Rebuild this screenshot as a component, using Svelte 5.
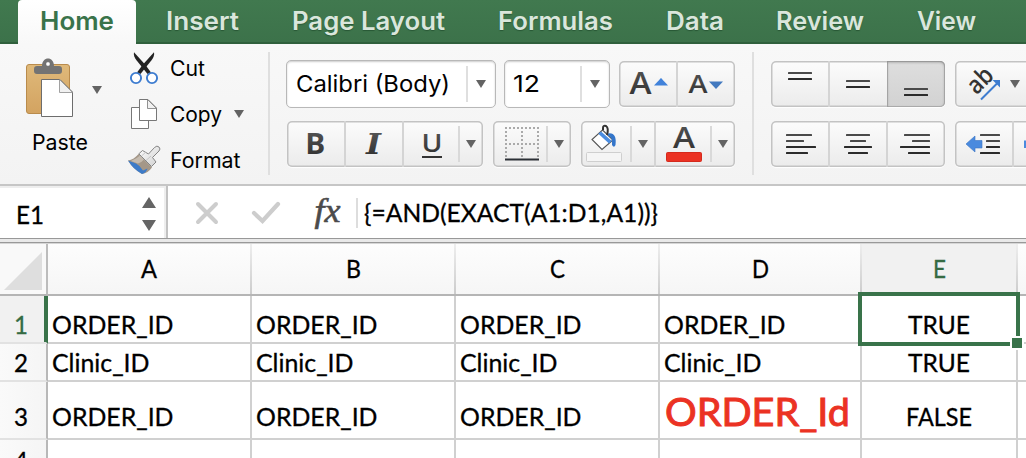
<script>
  const tabs = [
    { name: 'Home', w: 74, cell: 118, active: true },
    { name: 'Insert', w: 73, cell: 133 },
    { name: 'Page Layout', w: 153, cell: 198 },
    { name: 'Formulas', w: 115, cell: 176 },
    { name: 'Data', w: 58, cell: 104 },
    { name: 'Review', w: 88, cell: 146 },
    { name: 'View', w: 59, cell: 106 }
  ];
  const columns = ['A', 'B', 'C', 'D', 'E', ''];
  const letterWidth = { A: 16, B: 15, C: 15, D: 17, E: 13 };
  const order = { text: 'ORDER_ID', w: 121.5 };
  const clinic = { text: 'Clinic_ID', w: 97.5 };
  const rows = [
    { n: 1, cells: [order, order, order, order, { text: 'TRUE', w: 62 }, null] },
    { n: 2, cells: [clinic, clinic, clinic, clinic, { text: 'TRUE', w: 62 }, null] },
    { n: 3, cells: [order, order, order, { text: 'ORDER_Id', w: 185, big: true }, { text: 'FALSE', w: 66 }, null] },
    { n: 4, cells: [null, null, null, null, null, null] }
  ];
  const alignLines = [
    [[786, 812], [786, 804], [786, 816], [786, 808]],
    [[846, 870], [850, 866], [844, 872], [848, 868]],
    [[904, 930], [912, 930], [900, 930], [908, 930]]
  ];
</script>

{#snippet label(text, w, size, cap)}
  <svg class="label" width={w} height={cap}>
    <text x="0" y={cap} font-size={size} textLength={w} lengthAdjust="spacingAndGlyphs">{text}</text>
  </svg>
{/snippet}

{#snippet arrow()}
  <svg class="arrow" width="10" height="8" viewBox="0 0 10 8"><path d="M0 0H10L5 8Z" fill="#636363" /></svg>
{/snippet}

{#snippet bars(list, top)}
  {#each list as [a, b], i}
    <rect x={a} y={top + i * 6} width={b - a} height="2" rx=".5" fill={i < list.length / 2 ? '#4a4a4a' : '#2b2b2b'} />
  {/each}
{/snippet}

<svg width="0" height="0" class="defs">
  <defs>
    <linearGradient id="ink" x1="0" y1="0" x2="0" y2="1"><stop offset="0" stop-color="#5a5a5a" /><stop offset="1" stop-color="#2c2c2c" /></linearGradient>
    <linearGradient id="board" x1="0" y1="0" x2="0" y2="1"><stop offset="0" stop-color="#dfb97a" /><stop offset="1" stop-color="#d3a361" /></linearGradient>
    <linearGradient id="metal" x1="0" y1="0" x2="1" y2="1"><stop offset="0" stop-color="#ffffff" /><stop offset="1" stop-color="#cfcfcf" /></linearGradient>
  </defs>
</svg>

<div class="app">
  <nav class="tabs">
    {#each tabs as tab}
      <div class="tab" class:active={tab.active} style:width="{tab.cell}px">
        {@render label(tab.name, tab.w, 25, 18)}
      </div>
    {/each}
  </nav>

  <section class="ribbon">
    <div class="paste">
      <svg width="115" height="76" viewBox="0 46 115 76">
        <rect x="26.5" y="64.5" width="43" height="49" rx="2.5" fill="url(#board)" stroke="#b98b4c" />
        <path d="M37 66H42C42 61 45 58.5 48 58.5S54 61 54 66H59Q62 66 62 69V71Q62 74 59 74H37Q34 74 34 71V69Q34 66 37 66Z" fill="#737373" />
        <circle cx="48" cy="64" r="2.2" fill="#fff" stroke="#555" stroke-width=".5" />
        <path d="M41.5 79.5H60L72.5 92V116.5H41.5Z" fill="#fff" stroke="#6d6d6d" />
        <path d="M59.5 79.5V92.5H72.5Z" fill="#f1f1f1" stroke="#8a8a8a" stroke-width=".8" />
        <path d="M92 86H102L97 94Z" fill="#636363" />
      </svg>
      {@render label('Paste', 56, 21.5, 15)}
    </div>
    <div class="commands">
      <div class="command">
        <svg width="34" height="34" viewBox="127 51 34 34">
          <path d="M134 52.3C133.3 55.5 134.8 58 136.5 60.3L147.5 74 151 72.5 145.5 65Z" fill="#222" />
          <path d="M154 52.3C154.7 55.5 153.2 58 151.5 60.3L140.5 74 137 72.5 142.5 65Z" fill="#222" />
          <circle cx="136" cy="78" r="5.1" fill="#fff" stroke="#3d7cd0" stroke-width="1.9" />
          <circle cx="152" cy="78" r="5.1" fill="#fff" stroke="#3d7cd0" stroke-width="1.9" />
        </svg>
        {@render label('Cut', 35, 20.8, 15)}
      </div>
      <div class="command">
        <svg width="34" height="34" viewBox="127 97 34 34">
          <path d="M131.5 107.5H148.5V128.5H131.5Z" fill="#fff" stroke="#777" />
          <path d="M139.5 99.5H148L156.5 108V120.5H139.5Z" fill="#fff" stroke="#777" />
          <path d="M147.5 99.5V108.5H156.5Z" fill="#f1f1f1" stroke="#777" stroke-width=".8" />
        </svg>
        {@render label('Copy', 52, 20.8, 15)}
        {@render arrow()}
      </div>
      <div class="command">
        <svg width="34" height="34" viewBox="127 143 34 34">
          <path d="M128 160.5Q134 159.5 138.5 154L152 167.5Q148 173 142 174Q133 169 128 160.5Z" fill="#a49788" />
          <path d="M128 160.5L136 163.5Q140 165.5 143 170.5L147.5 168.5Q146 173 142 174Q133 169 128 160.5Z" fill="#3d7bc8" />
          <path d="M131 161Q137 158.5 140 155.5L144 159.5Q141 163 138 163.5Z" fill="#d3cac0" opacity=".7" />
          <path d="M142.5 150.5L148.5 154 154.5 147.5Q157 145 159 147T159 151L152.5 157.5 156 162 151.5 166.5 138.8 153.8Z" fill="url(#metal)" stroke="#858585" stroke-width="1" stroke-linejoin="round" />
          <path d="M141.5 156L146 152M146 160.5L151 156" stroke="#bbb" stroke-width=".8" />
        </svg>
        {@render label('Format', 70.5, 20.8, 15)}
      </div>
    </div>

    <div class="font-tools">
      <div class="line">
        <div class="field name">{@render label('Calibri (Body)', 154, 23.3, 17)}<i></i>{@render arrow()}</div>
        <div class="field size">{@render label('12', 27, 23.3, 17)}<i></i>{@render arrow()}</div>
        <div class="group sizes">
          <svg width="58" height="46" viewBox="619 61 58 46">
            <text x="629.5" y="94" class="glyph" font-size="30.5" textLength="22" lengthAdjust="spacingAndGlyphs">A</text>
            <path d="M654 85.5Q660 79 661 78Q662 79 668 85.5Z" fill="#4182da" />
          </svg>
          <svg width="58" height="46" viewBox="677 61 58 46">
            <text x="688.5" y="93" class="glyph" font-size="24.5" textLength="19" lengthAdjust="spacingAndGlyphs">A</text>
            <path d="M709 81.5H723L716 89Z" fill="#4279bf" />
          </svg>
        </div>
      </div>
      <div class="line">
        <div class="group style">
          <svg width="58" height="46" viewBox="287 121 58 46"><text x="305.3" y="154" class="glyph heavy" font-size="28" textLength="20" lengthAdjust="spacingAndGlyphs">B</text></svg>
          <svg width="58" height="46" viewBox="345 121 58 46"><text x="366" y="154" class="glyph serif" font-size="27.5" textLength="15" lengthAdjust="spacingAndGlyphs">I</text></svg>
          <svg width="80" height="46" viewBox="403 121 80 46">
            <text x="421.5" y="152" class="glyph" font-size="25.5" textLength="21" lengthAdjust="spacingAndGlyphs">U</text>
            <path d="M422 156H442V158H422Z" fill="#333" />
            <path d="M458 126H460V162H458Z" fill="#d9d9d9" />
            <path d="M466 140H476L471 148Z" fill="#636363" />
          </svg>
        </div>
        <div class="group border-tool">
          <svg width="78" height="46" viewBox="493 121 78 46">
            <path d="M505 128H539M505 144H539" stroke="#aaa" stroke-width="2" stroke-dasharray="2 2" />
            <path d="M506 131V159M522 131V159M538 131V159" stroke="#aaa" stroke-width="2" stroke-dasharray="2 2" />
            <path d="M505 158.5H539V160.5H505Z" fill="#2b2f35" />
            <path d="M546 126H548V162H546Z" fill="#d9d9d9" />
            <path d="M554 140H564L559 148Z" fill="#636363" />
          </svg>
        </div>
        <div class="group colors">
          <svg width="74" height="46" viewBox="581 121 74 46">
            <path d="M602.5 130L613 140 602 149.5 592 139.5Z" fill="#fff" stroke="#555" stroke-width="1.1" />
            <path d="M598.3 133.8L601 131.4 611.8 141 609 143.4Z" fill="#4a8ce0" />
            <path d="M608 133.5Q617 132 615.5 145Q614 148.5 612 145Q613 137 608 135.5Z" fill="#3375ca" />
            <path d="M603 130V128Q603 125 606 126Q609 128 607 135" fill="none" stroke="#333" stroke-width="2" />
            <rect x="586.5" y="152.5" width="35" height="9" rx="1" fill="#f5f5f5" stroke="#cfcfcf" />
            <path d="M630 126H632V162H630Z" fill="#d9d9d9" />
            <path d="M638 140H648L643 148Z" fill="#636363" />
          </svg>
          <svg width="80" height="46" viewBox="655 121 80 46">
            <text x="673" y="148" class="glyph" font-size="28" textLength="22" lengthAdjust="spacingAndGlyphs">A</text>
            <rect x="666.5" y="152.5" width="35" height="9" rx="1" fill="#eb3223" stroke="#d42a1d" />
            <path d="M710 126H712V162H710Z" fill="#d9d9d9" />
            <path d="M718 140H728L723 148Z" fill="#636363" />
          </svg>
        </div>
      </div>
    </div>

    <div class="align-tools">
      <div class="line">
        <div class="group">
          <svg width="58" height="46" viewBox="771 61 58 46">{@render bars([[788, 812], [788, 812]], 72)}</svg>
          <svg width="58" height="46" viewBox="829 61 58 46">{@render bars([[846, 870], [846, 870]], 80)}</svg>
          <svg class="pressed" width="58" height="46" viewBox="887 61 58 46">{@render bars([[904, 928], [904, 928]], 88)}</svg>
        </div>
        <div class="group">
          <svg width="80" height="46" viewBox="955 61 80 46">
            <text transform="translate(976.5 95.5) rotate(-45)" class="glyph ab" font-size="25" textLength="26.5" lengthAdjust="spacingAndGlyphs">ab</text>
            <path d="M981 99.5L997 83.5" stroke="#3d7cd0" stroke-width="2" />
            <path d="M992.5 80H1000V87.5Z" fill="#3d7cd0" />
            <path d="M1010 80H1020L1015 88Z" fill="#636363" />
          </svg>
        </div>
      </div>
      <div class="line">
        <div class="group">
          {#each alignLines as lines, i}
            <svg width="58" height="46" viewBox="{771 + i * 58} 121 58 46">{@render bars(lines, 134)}</svg>
          {/each}
        </div>
        <div class="group">
          <svg width="58" height="46" viewBox="955 121 58 46">
            <path d="M966 144L975 136V140.5H982V148H975V152Z" fill="#4a8ade" stroke="#3a74c2" stroke-width=".6" />
            {@render bars([[980, 1000], [986, 1000], [986, 1000], [980, 1000]], 134)}
          </svg>
          <svg width="58" height="46" viewBox="1013 121 58 46"><path d="M1024 140.5H1031V136L1040 144 1031 152V148H1024Z" fill="#4a8ade" /></svg>
        </div>
      </div>
    </div>
  </section>

  <section class="formula">
    <div class="name-box">
      {@render label('E1', 28, 24.5, 17)}
      <svg width="14" height="34" viewBox="142 195 14 34"><path d="M142 206H156L149 195ZM142 218H156L149 229Z" fill="#656565" /></svg>
    </div>
    <svg width="192" height="52" viewBox="168 186 192 52">
      <path d="M198 204L216 222M216 204L198 222" stroke="#cdcdcd" stroke-width="4" stroke-linecap="round" />
      <path d="M254 213L262.5 221 278 204" fill="none" stroke="#cdcdcd" stroke-width="4.2" stroke-linecap="round" />
      <text x="314.5" y="222" class="fx" font-size="33" textLength="26" lengthAdjust="spacingAndGlyphs">fx</text>
      <path d="M356 198H358V228H356Z" fill="#ddd" />
    </svg>
    <div class="expression">{@render label('{=AND(EXACT(A1:D1,A1))}', 294, 24.5, 18)}</div>
  </section>
  <div class="splitter"></div>

  <section class="sheet">
    <div class="corner"><svg width="46" height="50"><path d="M4 46H42V8Z" fill="#dedede" /></svg></div>
    {#each columns as c}
      <div class="head" class:current={c === 'E'}>{#if c}{@render label(c, letterWidth[c], 24.5, 18)}{/if}</div>
    {/each}
    {#each rows as row}
      <div class="row-head" class:current={row.n === 1} class:tall={row.n === 3}>{@render label(String(row.n), 14, 25, 18)}</div>
      {#each row.cells as cell, i}
        <div class="cell" class:center={i === 4} class:tall={row.n === 3} class:big={cell?.big}>
          {#if cell}{@render label(cell.text, cell.w, cell.big ? 39.5 : 24.5, 18)}{/if}
          {#if row.n === 1 && i === 4}<div class="selection"><b></b></div>{/if}
        </div>
      {/each}
    {/each}
  </section>
</div>

<style>
  :global(body) { margin: 0; overflow: hidden; }
  .app { width: 1026px; height: 458px; overflow: hidden; background: #fff; font-family: Inter, "Liberation Sans", sans-serif; }
  svg { display: block; flex: none; }
  .defs { position: absolute; }
  .label { overflow: visible; fill: currentColor; }
  .tabs { box-sizing: border-box; height: 44px; display: flex; padding-left: 18px; background: linear-gradient(#41794f, #3c724a 42px, #30603d 42px); font-weight: 600; color: #dae6dc; }
  .tab { flex: none; height: 32px; padding-top: 12px; display: flex; justify-content: center; }
  .tab .label { text-shadow: 0 1px 1px #285735; }
  .tab.active { background: linear-gradient(#fff, #f8f8f8); border-radius: 4px 4px 0 0; color: #39734a; }
  .tab.active .label { text-shadow: none; }
  .ribbon { box-sizing: border-box; height: 142px; display: flex; background: linear-gradient(#f8f8f8, #f3f3f3); border-bottom: 2px solid #c6c6c6; }
  .ribbon > div { flex: none; }
  .paste { width: 115px; padding-top: 2px; display: flex; flex-direction: column; gap: 13px; }
  .paste > .label { margin-left: 32px; }
  .commands { box-sizing: border-box; width: 155px; margin: 8px 0 9px; padding-left: 12px; border-right: 2px solid #dfdfdf; }
  .command { height: 34px; display: flex; align-items: center; gap: 9px; margin-bottom: 12px; }
  .command:first-child { margin-top: -1px; }
  .command .arrow { margin-left: 3px; }
  .font-tools { box-sizing: border-box; width: 484px; margin: 8px 0 9px; padding: 8px 0 0 16px; border-right: 2px solid #dfdfdf; display: flex; flex-direction: column; gap: 12px; }
  .align-tools { padding: 16px 0 0 17px; display: flex; flex-direction: column; gap: 12px; }
  .line { display: flex; height: 48px; align-items: center; }
  .align-tools .line { gap: 10px; }
  .field { box-sizing: border-box; height: 48px; display: flex; align-items: center; background: #fff; border: 1.5px solid #b8b8b8; border-radius: 5px; box-shadow: inset 0 1px 2px #ccc; }
  .field.name { width: 210px; padding-left: 9px; }
  .field.size { width: 106px; margin-left: 8px; padding-left: 8px; }
  .field i { width: 2px; height: 36px; background: #dfdfdf; margin-left: auto; }
  .field .arrow { margin: 0 9px 0 8px; }
  .field .label { position: relative; top: -.5px; }
  .group { height: 46px; display: flex; flex: none; border-radius: 5px; background: linear-gradient(#fcfcfc, #ebebeb); box-shadow: inset 0 0 0 1.5px #c3c3c3, 0 1px 1px #fff; }
  .group svg + svg { box-shadow: -1px 0 0 #d4d4d4, inset 1px 0 0 #d4d4d4; }
  .group .pressed.pressed { background: linear-gradient(#dedede, #d2d2d2); border-radius: 0 5px 5px 0; box-shadow: inset 0 1px 3px #8d8d8d, inset 0 0 0 1px #b0b0b0; }
  .sizes { margin-left: 9px; }
  .style { margin-left: 1px; }
  .border-tool, .colors { margin-left: 10px; }
  .glyph { font-family: "Open Sans", sans-serif; font-weight: 600; fill: url(#ink); }
  .glyph.heavy { font-weight: 700; }
  .glyph.serif { font-family: "DejaVu Serif", serif; font-style: italic; font-weight: 700; }
  .glyph.ab { fill: #333; }
  .formula { height: 52px; display: flex; font-family: Lato, sans-serif; }
  .name-box { box-sizing: border-box; width: 168px; padding: 4px 10px 0 16px; display: flex; align-items: center; justify-content: space-between; border-right: 2px solid #c2c2c2; box-shadow: inset 0 2px #eee, inset -2px 0 #eee; }
  .name-box .label { margin-top: 2px; }
  .formula .label, .sheet .label { stroke: currentColor; stroke-width: .3px; }
  .fx { font-family: "Liberation Serif", serif; font-style: italic; fill: #4b4b4b; stroke: #4b4b4b; stroke-width: .6px; }
  .expression { padding: 18px 0 0 4px; }
  .splitter { height: 6px; background: linear-gradient(#989898 1px, #e9e9e9 1px 4px, #999 4px 5px, #d6d6d6 5px); }
  .sheet { display: grid; grid-template-columns: 48px 204px 204px 204px 202px 156px 60px; grid-template-rows: 52px 48px 38px 58px 40px; font-family: Lato, sans-serif; color: #000; }
  .sheet > div { box-sizing: border-box; }
  .corner { border-right: 2px solid #bcbcbc; border-bottom: 2px solid #b5b5b5; background: #f9f9f9; }
  .head { display: flex; justify-content: center; padding: 16px 2px 0 0; border-bottom: 2px solid #b5b5b5; background: linear-gradient(#eee, #ccc) right / 2px 100% no-repeat, linear-gradient(#fdfdfd, #f6f6f6); }
  .head.current { color: #356b43; background: linear-gradient(#eee, #ccc) right / 2px 100% no-repeat, #f1f1f1; }
  .row-head { display: flex; align-items: flex-end; padding: 0 0 8px 14px; border-right: 2px solid #b8b8b8; border-bottom: 2px solid #e2e2e2; background: linear-gradient(90deg, #fafafa, #f5f5f5); }
  .row-head.current { color: #356b43; background: #f1f1f1; border-right-color: #39734a; box-shadow: inset -2px 0 #39734a; }
  .cell { display: flex; align-items: flex-end; padding: 0 0 8px 4px; border-right: 2px solid #d0d0d0; border-bottom: 2px solid #d0d0d0; position: relative; }
  .cell.center { justify-content: center; padding-left: 0; }
  .row-head.tall, .cell.tall { padding-bottom: 12px; }
  .cell.big { color: #eb3223; padding-left: 5px; }
  .cell.big .label { stroke-width: 1px; }
  .selection { position: absolute; box-sizing: border-box; left: -4px; top: -4px; width: 162px; height: 54px; border: 4px solid #39734a; z-index: 1; }
  .selection b { position: absolute; left: 148px; top: 40px; width: 10px; height: 10px; background: #39734a; border: 2px solid #fff; }
</style>
